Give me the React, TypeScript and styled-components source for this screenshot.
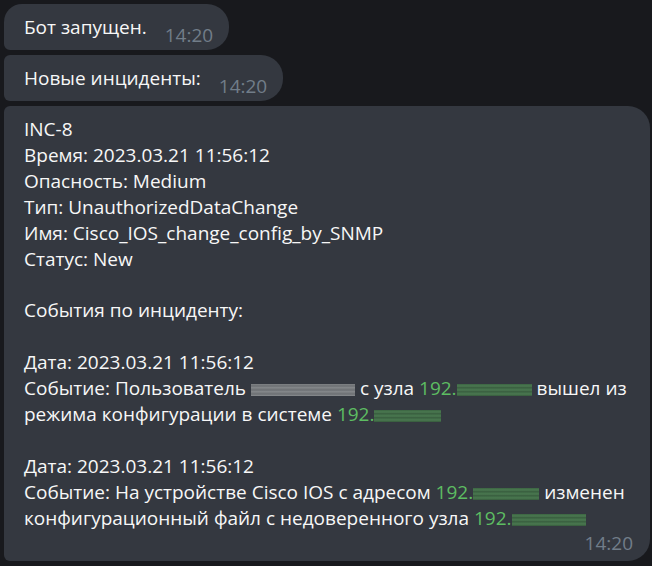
import React from "react";
import styled, { createGlobalStyle } from "styled-components";

const Global = createGlobalStyle`
  html, body { margin: 0; padding: 0; background: #18191d; }
  body { font-family: "Open Sans", "Noto Sans", sans-serif; }
`;

const Chat = styled.div`
  display: flex;
  flex-direction: column;
  align-items: flex-start;
  gap: 5px;
  padding: 4px 2px 4px 4px;
  width: 652px;
  box-sizing: border-box;
`;

type Pos = "first" | "middle" | "last";

const Bubble = styled.div<{ $pos: Pos; $wide?: boolean }>`
  background: #343840;
  color: #f7f7f7;
  font-size: 19px;
  line-height: 25.9px;
  box-sizing: border-box;
  border-radius: ${(p) => (p.$pos === "first" ? "18px 22px 22px 6px" : "6px 22px 22px 6px")};
  ${(p) => (p.$wide ? "align-self: stretch;" : "")}
`;

const ShortBubble = styled(Bubble)`
  display: flex;
  align-items: flex-end;
  height: 46px;
  padding: 0 16px 0 20px;
  gap: 18px;
`;

const ShortText = styled.span`
  padding-bottom: 9px;
`;

const Time = styled.span`
  color: #717d89;
  font-size: 19px;
  line-height: 24px;
  padding-bottom: 3px;
`;

const LongBubble = styled(Bubble)`
  display: flex;
  flex-direction: column;
  padding: 11px 17px 6px 20px;
`;

const Line = styled.div`
  min-height: 25.9px;
  white-space: nowrap;
`;

const Green = styled.span`
  color: #5dbd62;
`;

const Redact = styled.span<{ $w: number; $green?: boolean }>`
  display: inline-block;
  width: ${(p) => p.$w}px;
  height: 12px;
  vertical-align: -1px;
  background: ${(p) =>
    p.$green
      ? "repeating-linear-gradient(180deg, #3b6442 0px, #4b7951 2px, #36593c 4px)"
      : "repeating-linear-gradient(180deg, #808386 0px, #6c6f73 2px, #8a8d90 4px)"};
  filter: blur(0.4px);
`;

const FooterTime = styled(Time)`
  align-self: flex-end;
  padding-bottom: 0;
`;

export default function App() {
  return (
    <>
      <Global />
      <Chat>
        <ShortBubble $pos="first">
          <ShortText>Бот запущен.</ShortText>
          <Time>14:20</Time>
        </ShortBubble>
        <ShortBubble $pos="middle">
          <ShortText>Новые инциденты:</ShortText>
          <Time>14:20</Time>
        </ShortBubble>
        <LongBubble $pos="last" $wide>
          <Line>INC-8</Line>
          <Line>Время: 2023.03.21 11:56:12</Line>
          <Line>Опасность: Medium</Line>
          <Line>Тип: UnauthorizedDataChange</Line>
          <Line>Имя: Cisco_IOS_change_config_by_SNMP</Line>
          <Line>Статус: New</Line>
          <Line />
          <Line>События по инциденту:</Line>
          <Line />
          <Line>Дата: 2023.03.21 11:56:12</Line>
          <Line>
            Событие: Пользователь <Redact $w={104} /> с узла <Green>192.</Green>
            <Redact $w={75} $green /> вышел из
          </Line>
          <Line>
            режима конфигурации в системе <Green>192.</Green>
            <Redact $w={67} $green />
          </Line>
          <Line />
          <Line>Дата: 2023.03.21 11:56:12</Line>
          <Line>
            Событие: На устройстве Cisco IOS с адресом <Green>192.</Green>
            <Redact $w={66} $green /> изменен
          </Line>
          <Line>
            конфигурационный файл с недоверенного узла <Green>192.</Green>
            <Redact $w={74} $green />
          </Line>
          <FooterTime>14:20</FooterTime>
        </LongBubble>
      </Chat>
    </>
  );
}
